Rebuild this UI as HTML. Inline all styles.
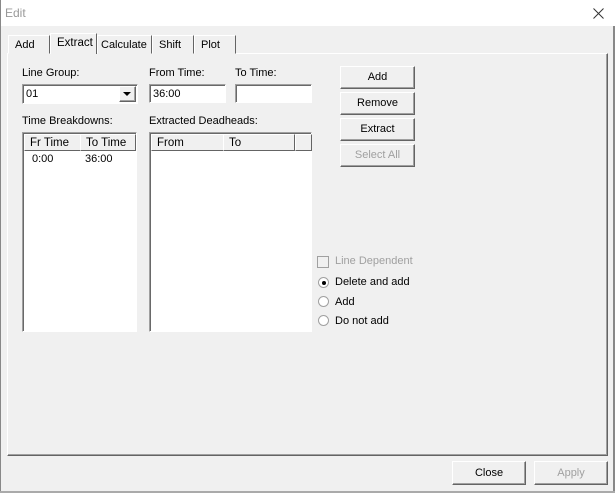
<!DOCTYPE html>
<html><head><style>
*{box-sizing:border-box}
body{margin:0;width:615px;height:493px;background:#f0f0f0;font:11px "Liberation Sans",Arial,sans-serif;color:#000;position:relative;overflow:hidden}
.a{position:absolute}
.title{left:0;top:0;width:615px;height:26px;background:#fff;border-left:1px solid #888}
.panel{left:7px;top:53px;width:601px;height:403px;border:1px solid;border-color:#fff #646464 #646464 #fff;box-shadow:inset -1px -1px 0 #a0a0a0}
.tab{top:35px;height:19px;border:1px solid;border-color:#fff #646464 transparent #fff;padding:3px 0 0 6px;background:#f0f0f0}
.inp{background:#fff;border:1px solid;border-color:#a0a0a0 #fff #fff #a0a0a0;box-shadow:inset 1px 1px 0 #696969;padding:3px 3px}
.btn{border:1px solid;border-color:#fff #646464 #646464 #fff;box-shadow:inset -1px -1px 0 #a0a0a0;text-align:center;line-height:20px;background:#f0f0f0}
.hd{top:1px;height:17px;border:1px solid;border-color:#fff #646464 #646464 #fff;padding:2px 0 0 5px;background:#f0f0f0;font-size:11.5px}
.rad{width:11px;height:11px;border-radius:50%;background:#fff;border:1px solid #a0a0a0}
</style></head><body>
<div class="a title"></div>
<div class="a" style="left:5px;top:6px;color:#999;font-size:12px">Edit</div>
<svg class="a" style="left:593px;top:8px" width="11" height="11"><path d="M0.5 0.5L10.5 10.5M10.5 0.5L0.5 10.5" stroke="#333" stroke-width="1"/></svg>
<div class="a" style="left:0;top:26px;width:1px;height:467px;background:#888"></div>
<div class="a" style="left:613px;top:26px;width:2px;height:467px;background:#888"></div>
<div class="a" style="left:0;top:491px;width:615px;height:2px;background:#aaa"></div>
<div class="a panel"></div>
<div class="a tab" style="left:8px;width:42px">Add</div>
<div class="a tab" style="left:50px;top:33px;height:21px;width:47px;padding-top:3px;border-bottom:none;font-size:11.5px;z-index:2">Extract</div>
<div class="a tab" style="left:97px;width:55px;padding-left:3px">Calculate</div>
<div class="a tab" style="left:152px;width:42px">Shift</div>
<div class="a tab" style="left:194px;width:42px">Plot</div>

<div class="a" style="left:22px;top:67px">Line Group:</div>
<div class="a inp" style="left:22px;top:84px;width:116px;height:20px">01</div>
<div class="a btn" style="left:119px;top:86px;width:17px;height:16px"></div>
<svg class="a" style="left:123px;top:92px" width="9" height="5"><path d="M0 0H8L4 4Z" fill="#000"/></svg>
<div class="a" style="left:149px;top:67px">From Time:</div>
<div class="a inp" style="left:149px;top:84px;width:77px;height:19px">36:00</div>
<div class="a" style="left:235px;top:67px">To Time:</div>
<div class="a inp" style="left:235px;top:84px;width:77px;height:19px"></div>

<div class="a" style="left:22px;top:115px">Time Breakdowns:</div>
<div class="a inp" style="left:22px;top:132px;width:115px;height:200px;padding:0">
<div class="a hd" style="left:1px;width:57px">Fr Time</div>
<div class="a hd" style="left:57px;width:56px">To Time</div>
<div class="a" style="left:9px;top:20px">0:00</div>
<div class="a" style="left:62px;top:20px">36:00</div>
</div>
<div class="a" style="left:149px;top:115px">Extracted Deadheads:</div>
<div class="a inp" style="left:149px;top:132px;width:163px;height:200px;padding:0">
<div class="a hd" style="left:1px;width:73px">From</div>
<div class="a hd" style="left:73px;width:72px">To</div>
<div class="a hd" style="left:145px;width:17px"></div>
</div>

<div class="a btn" style="left:340px;top:66px;width:75px;height:23px">Add</div>
<div class="a btn" style="left:340px;top:92px;width:75px;height:23px">Remove</div>
<div class="a btn" style="left:340px;top:118px;width:75px;height:23px">Extract</div>
<div class="a btn" style="left:340px;top:144px;width:75px;height:23px;color:#a0a0a0">Select All</div>

<div class="a" style="left:317px;top:256px;width:12px;height:12px;border:1px solid #a0a0a0;background:#f0f0f0"></div>
<div class="a" style="left:335px;top:255px;color:#a0a0a0">Line Dependent</div>
<div class="a rad" style="left:318px;top:277px"></div>
<div class="a" style="left:322px;top:281px;width:4px;height:4px;border-radius:50%;background:#000"></div>
<div class="a" style="left:335px;top:276px">Delete and add</div>
<div class="a rad" style="left:318px;top:296px"></div>
<div class="a" style="left:335px;top:296px">Add</div>
<div class="a rad" style="left:318px;top:315px"></div>
<div class="a" style="left:335px;top:315px">Do not add</div>

<div class="a btn" style="left:452px;top:461px;width:74px;height:24px;line-height:22px">Close</div>
<div class="a btn" style="left:534px;top:461px;width:74px;height:24px;line-height:22px;color:#a0a0a0">Apply</div>
</body></html>
